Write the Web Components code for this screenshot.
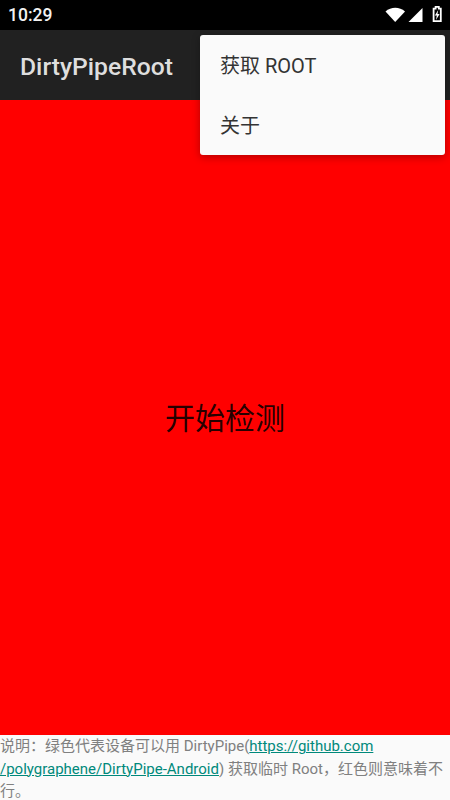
<!DOCTYPE html>
<html lang="zh">
<head>
<meta charset="utf-8">
<title>DirtyPipeRoot</title>
<style>
  html, body { margin: 0; padding: 0; height: 100%; }
  body { width: 450px; height: 800px; overflow: hidden; font-family: Roboto, "Noto Sans CJK SC", sans-serif; }
  app-screen a { color: #00897b; }
</style>
</head>
<body>
<app-screen>
  <status-bar time="10:29" slot="status"></status-bar>
  <app-bar slot="bar">DirtyPipeRoot</app-bar>
  <overflow-menu slot="menu">
    <menu-item>获取 ROOT</menu-item>
    <menu-item>关于</menu-item>
  </overflow-menu>
  <check-panel>开始检测</check-panel>
  <note-text slot="note">说明&#xFF1A;绿色代表设备可以用 DirtyPipe(<a href="#">https://github.com</a><br><a href="#">/polygraphene/DirtyPipe-Android</a>) 获取临时 Root&#xFF0C;红色则意味着不行。</note-text>
</app-screen>
<script>
// pantalla completa
class AppScreen extends HTMLElement {
  constructor() {
    super()
    this.attachShadow({ mode: 'open' })
    this.shadowRoot.innerHTML = `
    <style>
      :host { display: flex; flex-direction: column; position: relative; width: 450px; height: 800px; overflow: hidden; }
      .menu { position: absolute; top: 35px; right: 5px; z-index: 2; }
    </style>
    <slot name="status"></slot>
    <slot name="bar"></slot>
    <slot></slot>
    <slot name="note"></slot>
    <div class="menu"><slot name="menu"></slot></div>
    `
  }
}

class StatusBar extends HTMLElement {
  constructor() {
    super()
    this.attachShadow({ mode: 'open' })
  }

  connectedCallback() {
    const time = this.getAttribute('time') ?? '10:29'
    this.shadowRoot.innerHTML = `
    <style>
      :host { display: flex; flex: none; align-items: center; justify-content: space-between; height: 30px; background: #000; color: #f2f2f2; padding: 0 8px; box-sizing: border-box; font: 500 17.5px Roboto, sans-serif; }
      .icons { display: flex; align-items: center; }
      svg { display: block; }
    </style>
    <span>${time}</span>
    <div class="icons">
      <svg width="58" height="30" viewBox="0 0 58 30">
        <path d="M1.5 11.5 C7 6.6 15.5 6.6 21 11.5 L11.2 22 Z" fill="#fff"/>
        <path d="M38.5 8 V22 H24.5 Z" fill="#fff"/>
        <path d="M49.6 8.6 h2 v-1.7 h3.2 v1.7 h2 v12.5 h-7.2 Z" fill="none" stroke="#fff" stroke-width="1.8"/>
        <path d="M54.2 10 L50.9 15.6 H52.8 L52 20 L55.6 13.9 H53.5 Z" fill="#fff"/>
      </svg>
    </div>
    `
  }
}

class AppBar extends HTMLElement {
  constructor() {
    super()
    this.attachShadow({ mode: 'open' })
    this.shadowRoot.innerHTML = `
    <style>
      :host { display: flex; flex: none; align-items: center; height: 70px; padding: 2px 20px 0; box-sizing: border-box; background: #212121; color: #dedede; font: 500 24.7px Roboto, sans-serif; }
    </style>
    <slot></slot>
    `
  }
}

class OverflowMenu extends HTMLElement {
  constructor() {
    super()
    this.attachShadow({ mode: 'open' })
    this.shadowRoot.innerHTML = `
    <style>
      :host { display: block; width: 245px; background: #fafafa; border-radius: 3px; box-shadow: 0 2px 8px rgba(0,0,0,.3); }
    </style>
    <slot></slot>
    `
  }
}

class MenuItem extends HTMLElement {
  constructor() {
    super()
    this.attachShadow({ mode: 'open' })
    this.shadowRoot.innerHTML = `
    <style>
      :host { display: flex; align-items: center; height: 60px; padding: 0 20px 2px; box-sizing: border-box; color: #333; font: 400 20px Roboto, "Noto Sans CJK SC", sans-serif; }
    </style>
    <slot></slot>
    `
  }
}

class CheckPanel extends HTMLElement {
  constructor() {
    super()
    this.attachShadow({ mode: 'open' })
    this.shadowRoot.innerHTML = `
    <style>
      :host { display: flex; flex: 1; align-items: center; justify-content: center; padding-bottom: 4px; box-sizing: border-box; background: #f00; color: rgba(0,0,0,.87); font: 400 30px Roboto, "Noto Sans CJK SC", sans-serif; }
    </style>
    <slot></slot>
    `
  }
}

class NoteText extends HTMLElement {
  constructor() {
    super()
    this.attachShadow({ mode: 'open' })
    this.shadowRoot.innerHTML = `
    <style>
      :host { display: block; flex: none; height: 65px; background: #fafafa; color: #808080; font: 400 15px/22.5px Roboto, "Noto Sans CJK SC", sans-serif; overflow: hidden; }
    </style>
    <slot></slot>
    `
  }
}

customElements.define('app-screen', AppScreen)
customElements.define('status-bar', StatusBar)
customElements.define('app-bar', AppBar)
customElements.define('overflow-menu', OverflowMenu)
customElements.define('menu-item', MenuItem)
customElements.define('check-panel', CheckPanel)
customElements.define('note-text', NoteText)
</script>
</body>
</html>
